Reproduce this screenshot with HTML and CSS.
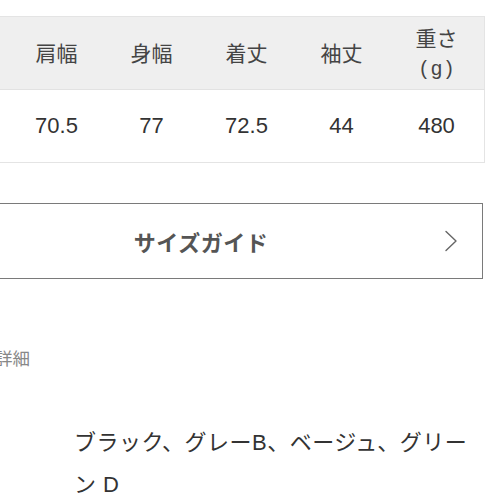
FILE: index.html
```html
<!DOCTYPE html>
<html lang="ja">
<head>
<meta charset="utf-8">
<link rel="stylesheet" href="styles.css">
</head>
<body>
<div class="page">
  <table class="size-table">
    <thead>
      <tr>
        <th class="lead"></th>
        <th>肩幅</th>
        <th>身幅</th>
        <th>着丈</th>
        <th>袖丈</th>
        <th>重さ<br><span class="unit">(g)</span></th>
      </tr>
    </thead>
    <tbody>
      <tr>
        <td class="lead"></td>
        <td>70.5</td>
        <td>77</td>
        <td>72.5</td>
        <td>44</td>
        <td>480</td>
      </tr>
    </tbody>
  </table>

  <a class="guide-btn" href="#">
    <span class="guide-label">サイズガイド</span>
    <svg class="chevron" width="14" height="22" viewBox="0 0 14 22" aria-hidden="true">
      <path d="M2 1.5 L12 11 L2 20.5" fill="none" stroke="#666" stroke-width="1.4" stroke-linecap="round" stroke-linejoin="round"/>
    </svg>
  </a>

  <h2 class="detail-heading">商品詳細</h2>

  <div class="detail-row">
    <p class="detail-value">ブラック、グレーB、ベージュ、グリーン&nbsp;D</p>
  </div>
</div>
</body>
</html>
```

FILE: styles.css
```css
html, body {
  margin: 0;
  padding: 0;
  background: #ffffff;
}

body {
  font-family: "Liberation Sans", "Noto Sans CJK JP", sans-serif;
  color: #333;
  overflow-x: hidden;
}

.page {
  margin-left: -87px;
  width: 570px;
  padding-top: 16px;
}

.size-table {
  width: 570px;
  border-collapse: collapse;
  table-layout: fixed;
  border: 1px solid #e4e4e4;
}

.size-table th,
.size-table td {
  width: 95px;
  text-align: center;
  vertical-align: middle;
  padding: 0;
}

.size-table th {
  background: #efefef;
  color: #444;
  font-weight: normal;
  font-size: 21px;
  line-height: 29px;
  height: 72px;
  border-bottom: 1px solid #e2e2e2;
}

.unit {
  font-size: 20px;
  letter-spacing: 4px;
  padding-left: 4px;
}

.size-table td {
  background: #fff;
  color: #333;
  font-size: 22px;
  height: 72px;
}

.guide-btn {
  display: flex;
  align-items: center;
  margin-top: 40px;
  margin-left: 8px;
  height: 74px;
  border: 1px solid #7a7a7a;
  text-decoration: none;
  padding: 0 24px 0 36px;
}

.guide-label {
  flex: 1;
  text-align: center;
  font-size: 22px;
  font-weight: bold;
  color: #555;
  letter-spacing: 0.5px;
}

.chevron {
  display: block;
}

.detail-heading {
  margin: 70px 0 0 47px;
  font-size: 17.5px;
  font-weight: normal;
  color: #888;
  line-height: 20px;
}

.detail-row {
  margin-top: 53px;
  padding-left: 161px;
}

.detail-value {
  margin: 0;
  font-size: 22px;
  line-height: 42px;
  letter-spacing: 0.5px;
  color: #333;
  width: 400px;
}
```
